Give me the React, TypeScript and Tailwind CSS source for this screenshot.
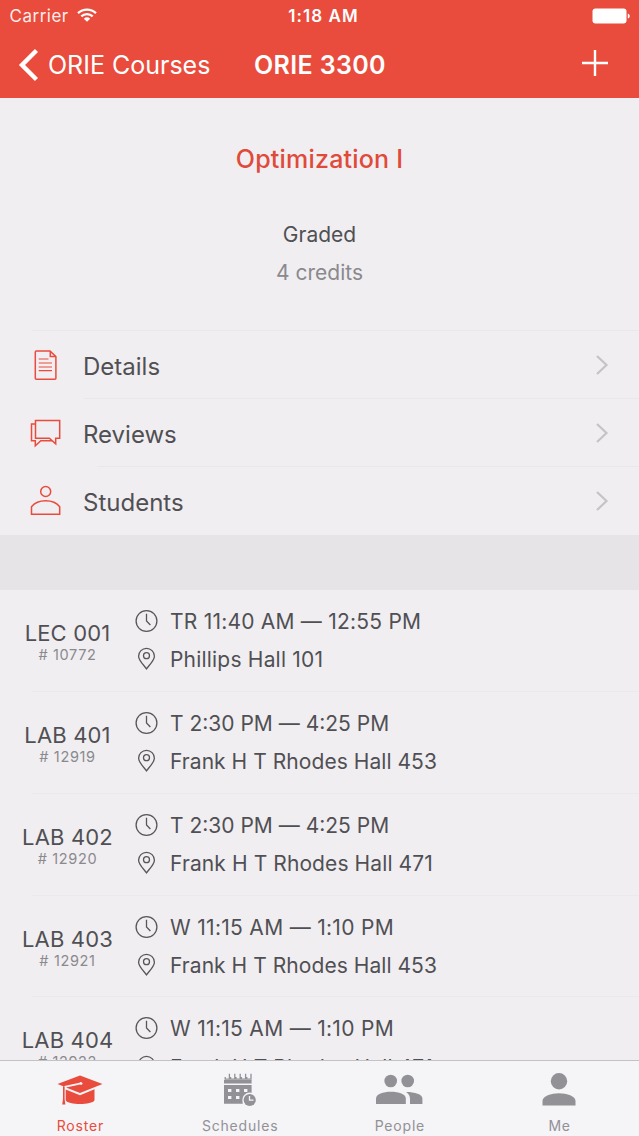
import type { ReactNode } from "react";

const FONT = "font-[Inter,'Liberation_Sans',sans-serif]";

function StatusBar() {
  return (
    <div className="grid h-8 grid-cols-3 items-center text-[17px] leading-8 text-white">
      <div className="flex items-center pl-[9.5px]">
        <span className="tracking-[0.5px] opacity-90">Carrier</span>
        <svg className="-mt-[2px] ml-[8px] h-[14px] w-[20px]" viewBox="0 0 20 14" fill="none" stroke="white" strokeWidth="2.3">
          <path d="M1 5.2A13 13 0 0 1 19 5.2" />
          <path d="M4.3 8.4A8.4 8.4 0 0 1 15.7 8.4" />
          <path d="M6.8 10.7A4.7 4.7 0 0 1 13.2 10.7L10 13.8Z" fill="white" stroke="none" />
        </svg>
      </div>
      <div className="pl-[8px] text-center font-semibold tracking-[1.1px]">1:18 AM</div>
      <div className="flex justify-end pr-[9px]">
        <svg className="h-4 w-[38px]" viewBox="0 0 38 16" fill="white">
          <rect x="0.5" y="0.5" width="34" height="15" rx="3" />
          <path d="M35.8 5.4Q37.8 6 37.8 8T35.8 10.6Z" />
        </svg>
      </div>
    </div>
  );
}

function NavBar() {
  return (
    <div className="flex h-[66px] items-center text-[25px] leading-[66px] text-white">
      <svg className="ml-[18px] h-[34px] w-5" viewBox="0 0 20 34" fill="none" stroke="white" strokeWidth="4.4">
        <path d="M18.5 2.5L4 17L18.5 31.5" />
      </svg>
      <span className="ml-[10px] w-[206px] whitespace-nowrap">ORIE Courses</span>
      <span className="font-semibold tracking-[0.35px] whitespace-nowrap">ORIE 3300</span>
      <svg className="-mt-1 mr-[31px] ml-auto h-[26px] w-[26px]" viewBox="0 0 26 26" stroke="white" strokeWidth="2.4">
        <path d="M13 0V26M0 13H26" />
      </svg>
    </div>
  );
}

function DocIcon() {
  return (
    <svg className="h-8 w-8" viewBox="0 0 32 32" fill="none" stroke="#e94c3c" strokeWidth="1.5">
      <path d="M6.3 2H20L25.9 7.6V29.3Q25.9 30.3 24.9 30.3H6.3Q5.3 30.3 5.3 29.3V3Q5.3 2 6.3 2Z" />
      <path d="M20.3 2V7.5H25.7" />
      <path d="M8.7 10H18.5M8.7 14H22M8.7 18H22M8.7 21.6H22" strokeWidth="1.1" />
    </svg>
  );
}

function BubblesIcon() {
  return (
    <svg className="h-8 w-8" viewBox="0 0 32 32" fill="none" stroke="#e94c3c" strokeWidth="1.5">
      <path d="M5.5 3.5H29.7V21.2H25.7V26.8L19.3 21.2H5.5Z" />
      <path d="M5.5 7H1.5V23.8H5.3V28.8L10.8 23.8H22" />
    </svg>
  );
}

function StudentIcon() {
  return (
    <svg className="h-8 w-8" viewBox="0 0 32 32" fill="none" stroke="#e94c3c" strokeWidth="1.5">
      <circle cx="15.7" cy="6.5" r="5" />
      <path d="M1.5 29.3V21.7C4.5 17.8 9.7 15.7 15.7 15.7S26.7 17.8 29.7 21.7V29.3Z" />
    </svg>
  );
}

function MenuRow({ icon, label, line }: { icon: ReactNode; label: string; line: string }) {
  return (
    <div className="flex h-[68px] flex-col">
      <div className={`h-px shrink-0 bg-[#e9e7ea] ${line}`} />
      <div className="flex flex-1 items-center pl-[29.5px]">
        <div className="w-[53.5px]">{icon}</div>
        <span className="mt-[4px] text-[24px] leading-[30px] text-[#505054]">{label}</span>
        <svg className="mr-[30px] ml-auto h-5 w-[14px]" viewBox="0 0 14 20" fill="none" stroke="#c4c3c7" strokeWidth="2.2">
          <path d="M2 1L11.5 10L2 19" />
        </svg>
      </div>
    </div>
  );
}

const sections = [
  {
    name: "LEC 001",
    number: "10772",
    start: "TR 11:40 AM",
    end: "12:55 PM",
    place: "Phillips Hall 101",
    timeSpacing: "tracking-[0.22px]",
    placeSpacing: "tracking-[0.2px]",
  },
  {
    name: "LAB 401",
    number: "12919",
    start: "T 2:30 PM",
    end: "4:25 PM",
    place: "Frank H T Rhodes Hall 453",
    timeSpacing: "tracking-normal",
    placeSpacing: "tracking-[0.05px]",
  },
  {
    name: "LAB 402",
    number: "12920",
    start: "T 2:30 PM",
    end: "4:25 PM",
    place: "Frank H T Rhodes Hall 471",
    timeSpacing: "tracking-normal",
    placeSpacing: "tracking-[0.1px]",
  },
  {
    name: "LAB 403",
    number: "12921",
    start: "W 11:15 AM",
    end: "1:10 PM",
    place: "Frank H T Rhodes Hall 453",
    timeSpacing: "tracking-[0.3px]",
    placeSpacing: "tracking-[0.05px]",
  },
  {
    name: "LAB 404",
    number: "12922",
    start: "W 11:15 AM",
    end: "1:10 PM",
    place: "Frank H T Rhodes Hall 471",
    timeSpacing: "tracking-[0.3px]",
    placeSpacing: "tracking-[0.1px]",
  },
];

function SectionRow({ name, number, start, end, place, timeSpacing, placeSpacing }: (typeof sections)[number]) {
  return (
    <div className="flex h-[101.85px] shrink-0 flex-col">
      <div className="flex flex-1">
        <div className="w-[135px] pt-[30px] text-center">
          <div className="text-[22px] leading-[26px] tracking-[0.15px] text-[#505054]">{name}</div>
          <div className="text-[14.5px] leading-[18px] tracking-[0.65px] text-[#8a898e]"># {number}</div>
        </div>
        <div className="pt-[12px] text-[21px] text-[#505054]">
          <div className="flex h-[38px] items-center">
            <svg className="h-6 w-6" viewBox="0 0 24 24" fill="none" stroke="#57565a" strokeWidth="1.3">
              <circle cx="11.5" cy="12" r="10.4" />
              <path d="M11.5 4.8V12L15.4 16" />
            </svg>
            <span className={`mt-[2px] ml-[11px] leading-8 whitespace-nowrap ${timeSpacing}`}>
              {start} <span className="[font-feature-settings:'calt'_0]">—</span> {end}
            </span>
          </div>
          <div className="flex h-[38.5px] items-center">
            <svg className="h-6 w-6" viewBox="0 0 24 24" fill="none" stroke="#57565a" strokeWidth="1.3">
              <path d="M11.5 21.8C9 18.4 3.6 13.4 3.6 9.2A7.9 7.9 0 0 1 19.4 9.2C19.4 13.4 14 18.4 11.5 21.8Z" />
              <circle cx="11.5" cy="8.7" r="3" />
            </svg>
            <span className={`mt-[2px] ml-[11px] leading-8 whitespace-nowrap ${placeSpacing}`}>{place}</span>
          </div>
        </div>
      </div>
      <div className="ml-8 h-px bg-[#ebe9ec]" />
    </div>
  );
}

function CapIcon() {
  return (
    <svg className="h-9 w-[48px]" viewBox="0 0 48 36" fill="#e94c3c">
      <path d="M1.5 12L24 3.5L46.5 12L24 21L10 15.4L24 12.6A1.7 1.3 0 1 0 23.5 10.7L7.2 14.2Z" />
      <path d="M9.7 17.6L24 23.3L38.5 17.3V28.2C36 33.2 12 33.2 9.7 28.2Z" />
      <path d="M7 14.3H8.6V27L9.4 32.5H6.2L7 27Z" />
    </svg>
  );
}

function CalendarIcon() {
  return (
    <svg className="mr-[4px] h-9 w-9" viewBox="0 0 36 36" fill="#929196">
      <path d="M4 8H31.6V11.6H4ZM4 13H31.6V22.5A8 8 0 0 0 22.8 31.7H4Z" />
      <g fill="none" stroke="#929196" strokeWidth="1.3">
        <path d="M5.2 5V7.2H9.4V1.8M10.6 5V7.2H14.8V1.8M16 5V7.2H20.2V1.8M21.4 5V7.2H25.6V1.8M26.8 5V7.2H31V1.8" />
      </g>
      <path fill="#f5f4f7" d="M8 17h3.4v3H8zM16 17h3.4v3H16zM24 17h3.4v3H24zM8 24h3.4v3H8zM16 24h3.4v3H16z" />
      <circle cx="29.7" cy="28" r="7.4" fill="#f5f4f7" />
      <circle cx="29.7" cy="28" r="6.1" />
      <path d="M29.5 23.9V28.2H33.5" fill="none" stroke="#f5f4f7" strokeWidth="1.3" />
    </svg>
  );
}

function PeopleIcon() {
  return (
    <svg className="h-9 w-[48px]" viewBox="0 0 48 36" fill="#929196">
      <circle cx="15.7" cy="9" r="6.3" />
      <circle cx="32.7" cy="9" r="6.3" />
      <path d="M1 32V26.5C1 22.2 8 19.8 16 19.8S30.8 22.2 30.8 26.5V32Z" />
      <path d="M31 19.9C40 19.9 47.4 22.2 47.4 26.5V32H35V27C35 24.2 34 21.8 31 19.9Z" />
    </svg>
  );
}

function MeIcon() {
  return (
    <svg className="h-9 w-9" viewBox="0 0 36 36" fill="#929196">
      <circle cx="18" cy="9.3" r="8.2" />
      <path d="M1.5 33.5V29C1.5 24.2 10 21.2 18 21.2S34.5 24.2 34.5 29V33.5Z" />
    </svg>
  );
}

function Tab({ icon, label, tone }: { icon: ReactNode; label: string; tone: string }) {
  return (
    <div className={`flex flex-1 flex-col items-center pt-[11px] text-[14px] leading-[18px] tracking-[0.8px] ${tone}`}>
      {icon}
      <span className="mt-[9px] ml-px">{label}</span>
    </div>
  );
}

export default function App() {
  return (
    <div className={`flex h-[1136px] w-[639px] flex-col overflow-hidden bg-[#f0eef1] ${FONT}`}>
      <header className="shrink-0 bg-[#e94c3c]">
        <StatusBar />
        <NavBar />
      </header>
      <section className="flex h-[232px] shrink-0 flex-col items-center pt-[45px]">
        <h1 className="text-[25px] leading-[32px] font-medium tracking-[0.2px] text-[#e04a3a]">Optimization I</h1>
        <p className="mt-[47px] text-[21px] leading-[26px] text-[#505054]">Graded</p>
        <p className="mt-[12px] text-[21px] leading-[26px] text-[#8a898e]">4 credits</p>
      </section>
      <nav className="h-[205px] shrink-0">
        <MenuRow icon={<DocIcon />} label="Details" line="ml-8" />
        <MenuRow icon={<BubblesIcon />} label="Reviews" line="ml-[84px]" />
        <MenuRow icon={<StudentIcon />} label="Students" line="ml-[97px]" />
      </nav>
      <div className="h-[55px] shrink-0 bg-[#e6e4e7]" />
      <main className="flex h-[470px] shrink-0 flex-col overflow-hidden">
        {sections.map((s) => (
          <SectionRow key={s.name} {...s} />
        ))}
      </main>
      <footer className="flex h-[76px] shrink-0 border-t border-[#c3c2c5] bg-[#f5f4f7]">
        <Tab icon={<CapIcon />} label="Roster" tone="text-[#e94c3c]" />
        <Tab icon={<CalendarIcon />} label="Schedules" tone="text-[#929196]" />
        <Tab icon={<PeopleIcon />} label="People" tone="text-[#929196]" />
        <Tab icon={<MeIcon />} label="Me" tone="text-[#929196]" />
      </footer>
    </div>
  );
}
